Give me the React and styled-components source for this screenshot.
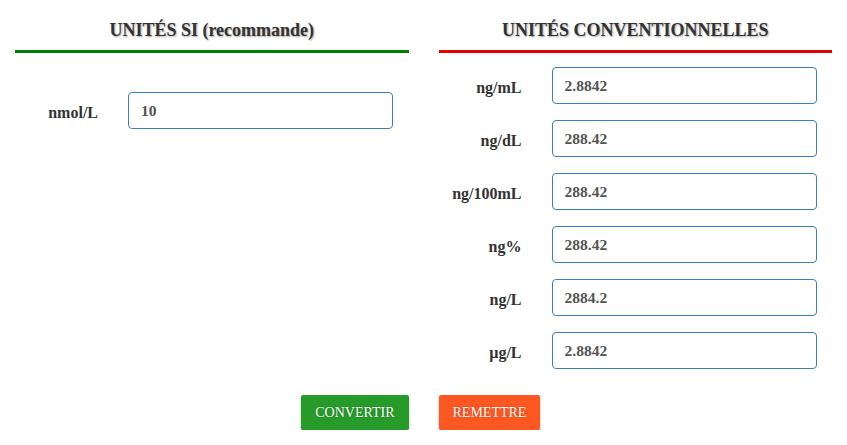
import React, { useState } from 'react';
import styled, { createGlobalStyle } from 'styled-components';

const serif = '"Liberation Serif", "Times New Roman", Times, serif';

const Global = createGlobalStyle`
  body {
    margin: 0;
    background: #fff;
    font-family: ${serif};
  }
`;

const Page = styled.div`
  padding: 0 15px;
  font-family: ${serif};
`;

const Columns = styled.div`
  display: grid;
  grid-template-columns: 1fr 1fr;
  column-gap: 30px;
`;

const Column = styled.div`
  display: flex;
  flex-direction: column;
`;

const Heading = styled.h2`
  margin: 0;
  padding: 20px 0 9px;
  text-align: center;
  font-family: ${serif};
  font-size: 18px;
  font-weight: bold;
  color: #333;
  text-shadow: 1px 1px 2px rgba(0, 0, 0, 0.35);
  border-bottom: 3px solid ${(p) => p.$line};
`;

const Fields = styled.div`
  display: flex;
  flex-direction: column;
  gap: 16px;
  padding-top: ${(p) => p.$top}px;
  padding-right: ${(p) => p.$right}px;
`;

const Row = styled.div`
  display: grid;
  grid-template-columns: 113px 1fr;
  align-items: center;
`;

const Label = styled.label`
  text-align: right;
  padding-right: 30px;
  padding-top: 5px;
  font-family: ${serif};
  font-size: 16px;
  font-weight: bold;
  color: #333;
`;

const Input = styled.input`
  box-sizing: border-box;
  width: 100%;
  height: 37px;
  padding: 0 12px;
  border: 1px solid #3c7fbd;
  border-radius: 4px;
  font-family: ${serif};
  font-size: 15.5px;
  font-weight: bold;
  color: #555;
  outline: none;
`;

const Actions = styled.div`
  display: grid;
  grid-template-columns: 1fr 1fr;
  column-gap: 30px;
  margin-top: 26px;
`;

const Button = styled.button`
  justify-self: ${(p) => p.$align};
  height: 35px;
  padding: 0 14px;
  border: 0;
  border-radius: 2px;
  background: ${(p) => p.$bg};
  color: #fff;
  font-family: ${serif};
  font-size: 14px;
  text-shadow: 0 0 2px rgba(0, 0, 0, 0.3);
  box-shadow: 0 2px 3px rgba(0, 0, 0, 0.25);
  cursor: pointer;
`;

const conv = [
  { unit: 'ng/mL', f: 0.28842 },
  { unit: 'ng/dL', f: 28.842 },
  { unit: 'ng/100mL', f: 28.842 },
  { unit: 'ng%', f: 28.842 },
  { unit: 'ng/L', f: 288.42 },
  { unit: 'µg/L', f: 0.28842 },
];

const fmt = (v) => String(parseFloat(v.toPrecision(5)));

export default function App() {
  const [si, setSi] = useState('10');
  const n = parseFloat(si) || 0;

  return (
    <Page>
      <Global />
      <Columns>
        <Column>
          <Heading $line="#008000">UNITÉS SI (recommande)</Heading>
          <Fields $top={39} $right={16}>
            <Row>
              <Label>nmol/L</Label>
              <Input value={si} onChange={(e) => setSi(e.target.value)} />
            </Row>
          </Fields>
        </Column>
        <Column>
          <Heading $line="#e60000">UNITÉS CONVENTIONNELLES</Heading>
          <Fields $top={14} $right={15}>
            {conv.map((c) => (
              <Row key={c.unit}>
                <Label>{c.unit}</Label>
                <Input readOnly value={fmt(n * c.f)} />
              </Row>
            ))}
          </Fields>
        </Column>
      </Columns>
      <Actions>
        <Button $align="end" $bg="#279b2a">CONVERTIR</Button>
        <Button $align="start" $bg="#ff5722" onClick={() => setSi('')}>REMETTRE</Button>
      </Actions>
    </Page>
  );
}
